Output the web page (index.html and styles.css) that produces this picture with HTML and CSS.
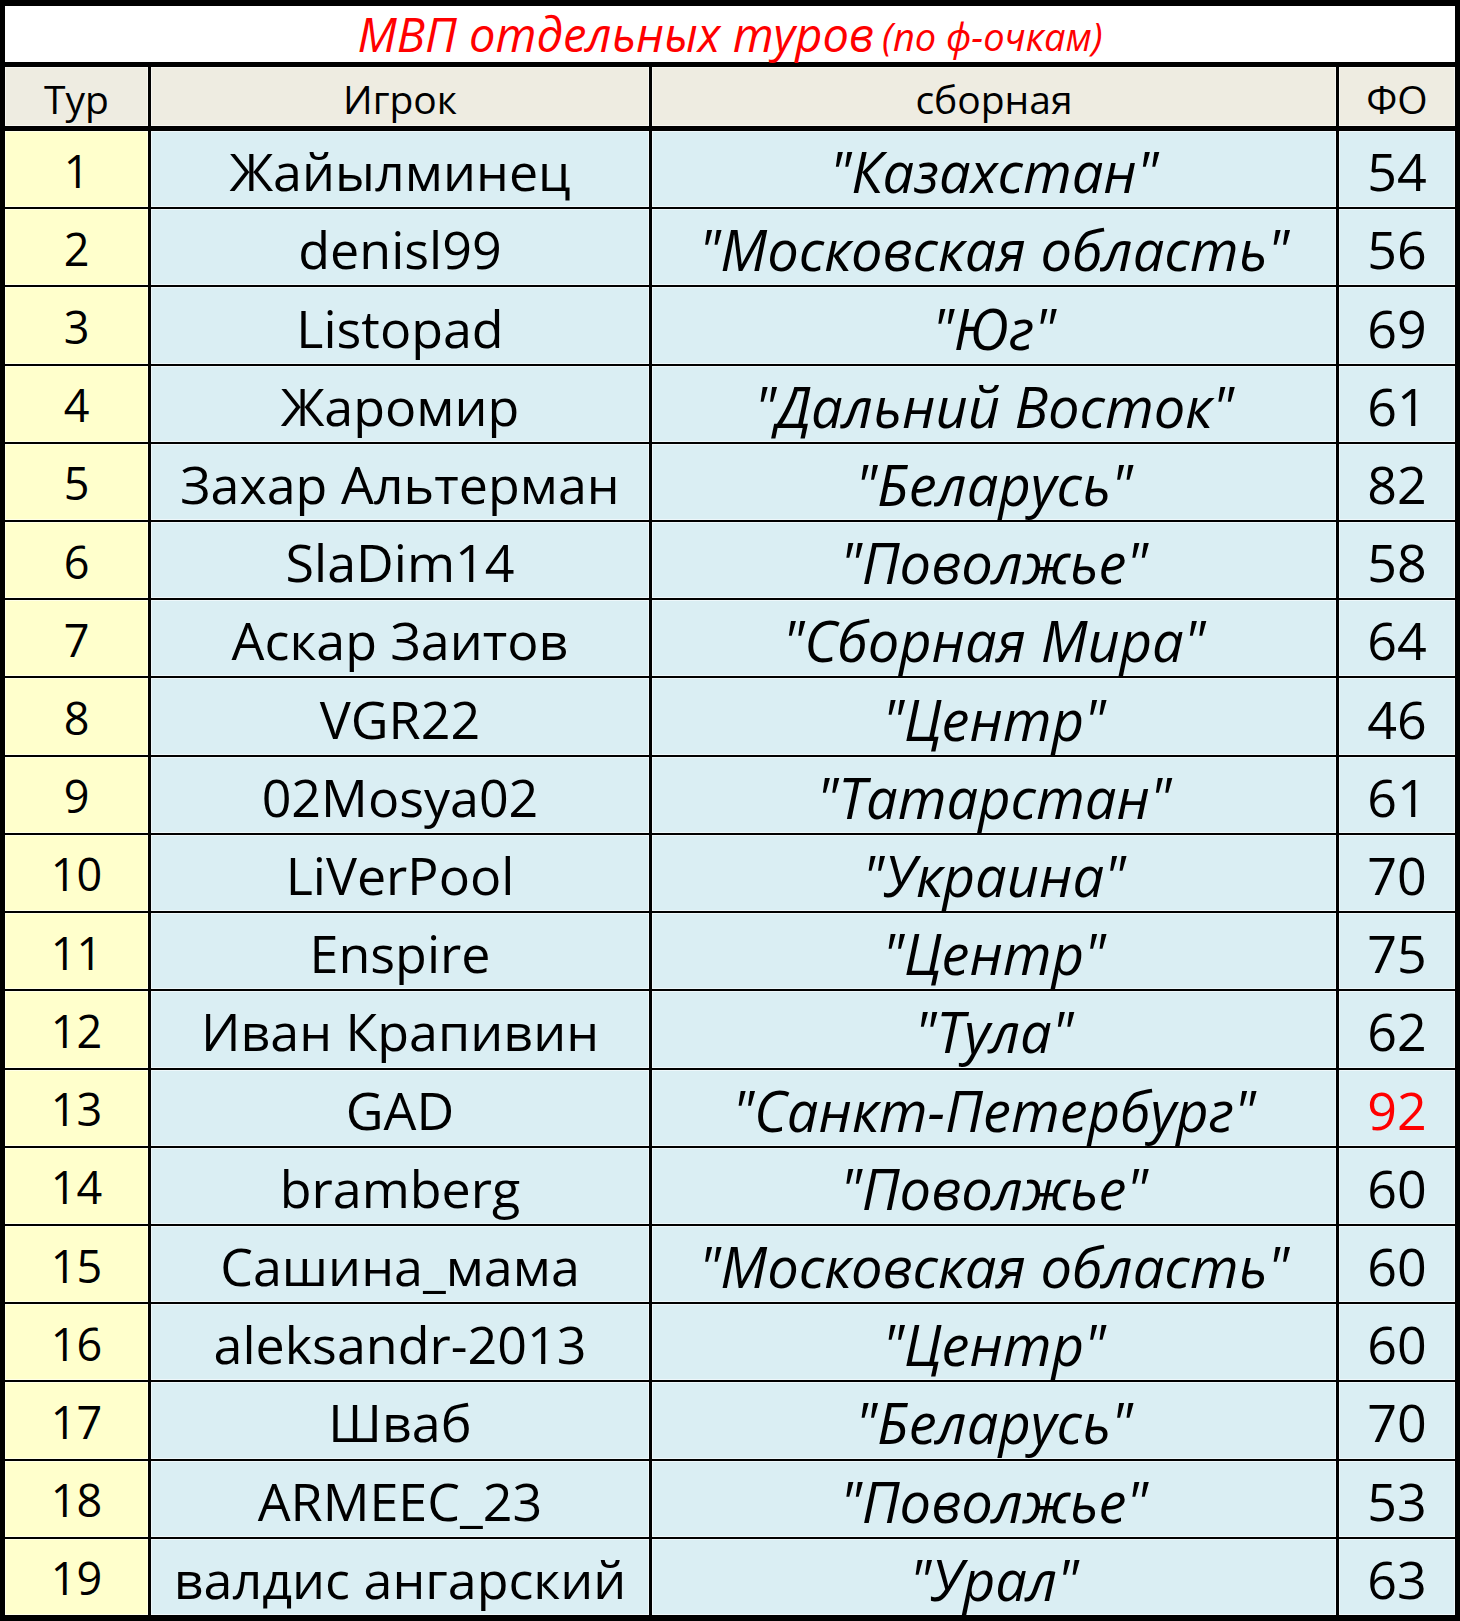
FILE: index.html
```html
<!DOCTYPE html>
<html lang="ru">
<head>
<meta charset="utf-8">
<title>МВП отдельных туров</title>
<link rel="stylesheet" href="styles.css">
</head>
<body>
<div class="sheet">
  <div class="title"><span class="title-main">МВП отдельных туров</span> <span class="title-sub">(по ф-очкам)</span></div>
  <div class="grid head">
    <div class="cell hc">Тур</div>
    <div class="cell hc">Игрок</div>
    <div class="cell hc">сборная</div>
    <div class="cell hc">ФО</div>
  </div>
  <div class="grid rows">
    <div class="cell num">1</div><div class="cell name">Жайылминец</div><div class="cell team">"Казахстан"</div><div class="cell fo">54</div>
    <div class="cell num">2</div><div class="cell name">denisl99</div><div class="cell team">"Московская область"</div><div class="cell fo">56</div>
    <div class="cell num">3</div><div class="cell name">Listopad</div><div class="cell team">"Юг"</div><div class="cell fo">69</div>
    <div class="cell num">4</div><div class="cell name">Жаромир</div><div class="cell team">"Дальний Восток"</div><div class="cell fo">61</div>
    <div class="cell num">5</div><div class="cell name">Захар Альтерман</div><div class="cell team">"Беларусь"</div><div class="cell fo">82</div>
    <div class="cell num">6</div><div class="cell name">SlaDim14</div><div class="cell team">"Поволжье"</div><div class="cell fo">58</div>
    <div class="cell num">7</div><div class="cell name">Аскар Заитов</div><div class="cell team">"Сборная Мира"</div><div class="cell fo">64</div>
    <div class="cell num">8</div><div class="cell name">VGR22</div><div class="cell team">"Центр"</div><div class="cell fo">46</div>
    <div class="cell num">9</div><div class="cell name">02Mosya02</div><div class="cell team">"Татарстан"</div><div class="cell fo">61</div>
    <div class="cell num">10</div><div class="cell name">LiVerPool</div><div class="cell team">"Украина"</div><div class="cell fo">70</div>
    <div class="cell num">11</div><div class="cell name">Enspire</div><div class="cell team">"Центр"</div><div class="cell fo">75</div>
    <div class="cell num">12</div><div class="cell name">Иван Крапивин</div><div class="cell team">"Тула"</div><div class="cell fo">62</div>
    <div class="cell num">13</div><div class="cell name">GAD</div><div class="cell team">"Санкт-Петербург"</div><div class="cell fo best">92</div>
    <div class="cell num">14</div><div class="cell name">bramberg</div><div class="cell team">"Поволжье"</div><div class="cell fo">60</div>
    <div class="cell num">15</div><div class="cell name">Сашина_мама</div><div class="cell team">"Московская область"</div><div class="cell fo">60</div>
    <div class="cell num">16</div><div class="cell name">aleksandr-2013</div><div class="cell team">"Центр"</div><div class="cell fo">60</div>
    <div class="cell num">17</div><div class="cell name">Шваб</div><div class="cell team">"Беларусь"</div><div class="cell fo">70</div>
    <div class="cell num">18</div><div class="cell name">ARMEEC_23</div><div class="cell team">"Поволжье"</div><div class="cell fo">53</div>
    <div class="cell num">19</div><div class="cell name">валдис ангарский</div><div class="cell team">"Урал"</div><div class="cell fo">63</div>
  </div>
</div>
</body>
</html>
```
FILE: styles.css
```css
html, body {
  margin: 0;
  padding: 0;
  background: #000;
}
.sheet {
  width: 1460px;
  height: 1621px;
  box-sizing: border-box;
  background: #000;
  padding: 6px 5px 6px 5px;
  display: flex;
  flex-direction: column;
  font-family: "Open Sans", "Noto Sans", sans-serif;
  color: #000;
}
.title {
  height: 56px;
  flex: none;
  background: #fff;
  margin-bottom: 5px;
  display: flex;
  align-items: center;
  justify-content: center;
  gap: 8px;
  color: #ff0000;
  font-style: italic;
  white-space: nowrap;
  box-sizing: border-box;
}
.title-main {
  font-size: 47px;
  line-height: 1;
}
.title-sub {
  font-size: 38px;
  line-height: 1;
  padding-top: 4px;
}
.grid {
  display: grid;
  grid-template-columns: 143px 498px 684px 116px;
  column-gap: 3px;
}
.head {
  height: 59px;
  flex: none;
  margin-bottom: 5px;
}
.rows {
  flex: 1;
  row-gap: 2px;
  grid-template-rows: repeat(19, 1fr);
}
.cell {
  display: flex;
  align-items: center;
  justify-content: center;
  white-space: nowrap;
  background: #daeef3;
  box-shadow: inset 0 0 0 1px rgba(255, 255, 255, 0.55);
  line-height: 1;
}
.hc {
  background: #eeece1;
  font-size: 39px;
  padding-top: 4px;
}
.num {
  background: #ffffcc;
  font-size: 45px;
  padding-top: 2px;
}
.name {
  font-size: 52px;
  padding-top: 4px;
}
.team {
  font-size: 56px;
  font-style: italic;
  padding-top: 4px;
}
.fo {
  font-size: 52px;
  padding-top: 4px;
}
.best {
  color: #ff0000;
}
```
